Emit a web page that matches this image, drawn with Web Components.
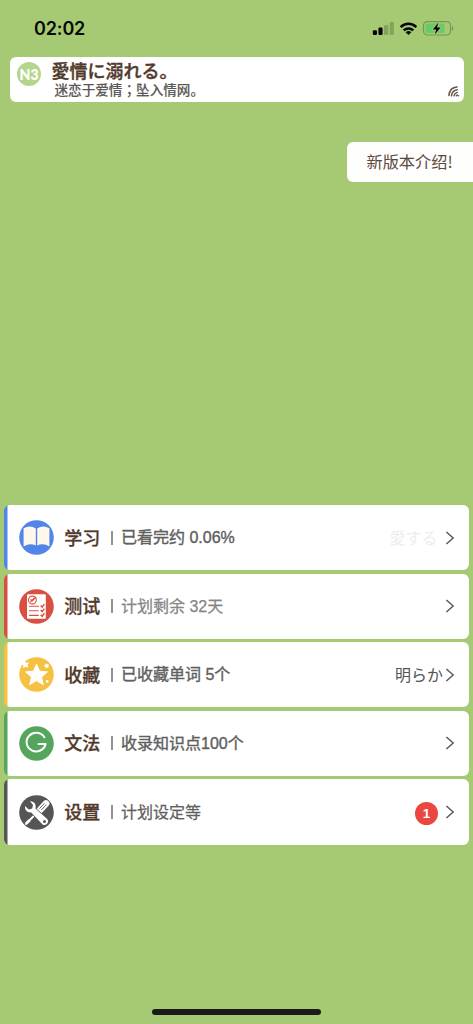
<!DOCTYPE html>
<html lang="zh-CN">
<head>
<meta charset="utf-8">
<title>单词学习</title>
<style>
html,body{margin:0;height:100%;overflow:hidden}
body{background:#a5ca73;font-family:"Liberation Sans","Noto Sans CJK SC",sans-serif}
</style>
</head>
<body>
<study-app></study-app>
<script>
const define = (name, html, setup) => customElements.define(name, class extends HTMLElement {
  connectedCallback() {
    if (this.shadowRoot) return;
    const t = document.createElement('template');
    t.innerHTML = html;
    this.attachShadow({mode: 'open'}).append(t.content.cloneNode(true));
    if (setup) setup(this, this.shadowRoot);
  }
});

define('status-bar', `
<style>
:host{display:flex;height:57px;box-sizing:border-box;justify-content:space-between;padding:0 19px 0 34px;align-items:center}
time{font:600 18px/22px Inter,sans-serif;color:#080a05;letter-spacing:-.15px;padding-top:1px}
svg{display:block}
</style>
<time>02:02</time>
<svg width="82" height="18" viewBox="372 20 82 18">
  <g fill="#050505"><rect x="372.8" y="30.2" width="4.2" height="4.8" rx="1.2"/><rect x="378.4" y="27.6" width="4.2" height="7.4" rx="1.2"/></g>
  <g fill="#84a25c"><rect x="384" y="25" width="4.2" height="10" rx="1.2"/><rect x="389.7" y="22" width="4.2" height="13" rx="1.2"/></g>
  <g fill="none" stroke="#050505" stroke-width="2.5"><path d="M400.7 27.1a11 11 0 0 1 15.6 0"/><path d="M403.7 30.4a6.8 6.8 0 0 1 9.6 0"/></g>
  <path d="M405.7 32.3a4 4 0 0 1 5.6 0L408.5 35.1z" fill="#050505"/>
  <rect x="423.5" y="21.6" width="27" height="13.4" rx="4" fill="none" stroke="#799657" stroke-width="1.2"/>
  <rect x="425.4" y="23.5" width="19" height="9.6" rx="2" fill="#65cb67"/>
  <path d="M451.8 26v5q1.5-.8 1.5-2.5t-1.5-2.5z" fill="#799657"/>
  <path d="M438.3 22.6l-5.5 6.8h3.4l-1.3 5.2 5.7-7h-3.5z" fill="#050505" stroke="#a5ca73" stroke-width="2" paint-order="stroke"/>
</svg>`);

define('word-card', `
<style>
:host{display:flex;height:45.4px;box-sizing:border-box;margin:0 9.5px;padding:5px 4px 0 7.5px;background:#fff;border-radius:6px}
.level{flex:none;width:24px;height:24px;border-radius:50%;background:#b4d68c;color:#fff;font:800 14px/25px Lato,sans-serif;text-align:center}
.text{flex:1;padding-left:10.5px;white-space:nowrap}
.jp{height:20px;margin-top:-.6px;font:500 18px/18px "Noto Sans CJK JP",sans-serif;color:#513a2b;-webkit-text-stroke:.4px}
.cn{padding-left:3px;font:500 13.6px/16px "Noto Sans CJK SC",sans-serif;color:#5b5856;-webkit-text-stroke:.1px}
svg{align-self:flex-end;margin-bottom:5px}
</style>
<span class="level">N3</span>
<div class="text"><div class="jp"><slot name="word"></slot></div><div class="cn"><slot name="meaning"></slot></div></div>
<svg width="12" height="11" viewBox="0 0 12 11" fill="none" stroke="#665247" stroke-width="1.5" stroke-linecap="round"><path d="M.9 9.5C1.3 4.5 4.5 1.2 9 .9M3.4 9.8C3.9 6.5 6 4.2 9.2 3.7M6 9.8C6.3 8.2 7.5 6.9 9.2 6.4M8.4 9.8l.8-.8M10.5 9.8h.1"/></svg>`);

define('version-tag', `
<style>
:host{display:block;margin:39.6px 0 0 347px;height:40px;box-sizing:border-box;padding-left:19.5px;border-radius:6px 0 0 6px;background:#fefefc;color:#5b493e;font:400 16.2px/39px "Noto Sans CJK SC",sans-serif;white-space:nowrap}
</style><slot></slot>`);

const icons = {
  book: `<circle cx="17.5" cy="17.5" r="17.3" fill="#5285e9"/>
    <path d="M4.6 8.3Q11.2 4.8 16.8 8.5V25.5Q11 22.4 4.6 26.4zM18.2 8.5Q23.8 4.8 30.4 8.3V26.4Q24 22.4 18.2 25.5z" fill="#fff6ec"/>`,
  test: `<circle cx="17.5" cy="17.5" r="17.3" fill="#d85041"/>
    <rect x="8" y="5.2" width="18.8" height="24.6" rx="1" fill="#fff"/>
    <g fill="none" stroke="#d85041" stroke-width="1.1"><circle cx="13.4" cy="11" r="3.9"/><path d="M11.5 10.3l1.7 1.7 3.8-4M11.4 13l4-4"/>
    <path d="M10 17.2h9.8M10 21.7h9.8M10 26.4h9.8"/><path d="M21.7 16.6l1.4 1.5 2.3-3M21.7 21.1l1.4 1.5 2.3-3M21.7 25.8l1.4 1.5 2.3-3" stroke-width="1.4"/></g>`,
  star: `<circle cx="17.5" cy="17.5" r="17.3" fill="#f5c142"/>
    <path d="M17.5 7l3.1 7.2 7.8.7-5.9 5.1 1.8 7.7-6.8-4.1-6.8 4.1 1.8-7.7L6.6 14.9l7.8-.7z" fill="#fff" stroke="#fff" stroke-width="1" stroke-linejoin="round"/>
    <path d="M5.3 3.6l1.8 2.1 2.9-.2-1.4 2.4.8 2.7-2.7-.9-2.4 1.5v-2.8L2 6.7l2.8-.7z" fill="#fff"/>
    <path d="M27 6.6l1 1.1 1.5-.1-.6 1.4.5 1.4-1.5-.3-1.2.9-.2-1.5-1.3-.8 1.4-.7z" fill="#fff" stroke="#fff" stroke-width=".6"/><circle cx="28.2" cy="24.4" r="1.3" fill="#fff"/>`,
  grammar: `<circle cx="17.5" cy="17.5" r="17.3" fill="#55a65c"/>
    <path d="M25.4 11.2A9.6 9.3 0 1 0 26.6 18H19.5" fill="none" stroke="#fff" stroke-width="2" stroke-linecap="round" stroke-linejoin="round"/>`,
  tools: `<circle cx="17.5" cy="17.5" r="17.3" fill="#555"/>
    <path d="M21 15l6-6.5" stroke="#fff" stroke-width="6.7" stroke-linecap="round"/>
    <path d="M20.5 13.6l5-5.3M22.3 15l5-5.3" stroke="#555" stroke-width=".9"/>
    <path d="M17 18.7L10 25.8" stroke="#fff" stroke-width="2"/><path d="M9.5 24.2l2.1 2-3.4 3.4-2.5.4.8-2.8z" fill="#fff"/>
    <path d="M11 6.2c4-.4 6.7 3.4 5.4 7.4l11.8 10.4a3.6 3.6 0 0 1-4.9 5.2L12.3 17.5C8.5 18.2 5.3 15 6.1 11.1L9.7 14.4 13.2 13.5 14 10.1z" fill="#fff" stroke="#555" stroke-width="1.4" paint-order="stroke"/>
    <circle cx="25.5" cy="26.5" r="1.5" fill="#555"/>`
};

define('menu-row', `
<style>
:host{display:flex;align-items:center;height:65.3px;box-sizing:border-box;padding:0 14px 0 15.5px;background:linear-gradient(90deg,var(--accent) 3.4px,#fff 3.6px);border-radius:6px;white-space:nowrap}
.icon{flex:none;width:35px;height:35px}
svg{display:block}
.name{margin-left:10px;width:47px;margin-top:-2px;font:500 18px/26px "Noto Sans CJK SC",sans-serif;color:#513a2b;-webkit-text-stroke:.3px}
.bar{width:1.3px;height:14px;background:#929292;margin-right:8.4px}
.desc{flex:1;padding-top:1px;font:400 16px/24px "Liberation Sans","Noto Sans CJK SC",sans-serif;color:var(--desc,#5f5f5f);-webkit-text-stroke:var(--weight,.4px)}
.extra{font:400 16px/24px "Noto Sans CJK JP",sans-serif;color:var(--extra,#555);margin-top:-1px}
.arrow{margin-left:2px}
</style>
<span class="icon"></span><span class="name"><slot name="name"></slot></span><i class="bar"></i>
<span class="desc"><slot></slot></span><span class="extra"><slot name="extra"></slot></span>
<svg class="arrow" width="10" height="16" viewBox="0 0 10 16"><path d="M1.4 2l6.8 6-6.8 6" fill="none" stroke="#555" stroke-width="1.4"/></svg>`,
(host, root) => {
  root.querySelector('.icon').innerHTML = '<svg width="35" height="35" viewBox="0 0 35 35">' + icons[host.getAttribute('icon')] + '</svg>';
});

define('count-badge', `
<style>:host{display:block;width:23px;height:23px;border-radius:50%;background:#e9473f;color:#fff;font:700 13.5px/23px "Liberation Sans",sans-serif;text-align:center;margin:4px 5px 0 0}</style><slot></slot>`);

define('study-app', `
<style>
:host{display:flex;flex-direction:column;height:1024px;width:473px;background:#a5ca73}
nav{display:flex;flex-direction:column;gap:3.3px;margin:323px 4px 0 3.8px}
.home{width:169px;height:5.6px;border-radius:3px;background:#1b1c1a;margin:auto auto 9.4px 152px}
</style>
<status-bar></status-bar>
<word-card><span slot="word">愛情に溺れる。</span><span slot="meaning">迷恋于爱情<span lang="zh-TW" style="font-family:'Noto Sans CJK TC',sans-serif">；</span>坠入情网。</span></word-card>
<version-tag>新版本介绍!</version-tag>
<nav>
<menu-row icon="book" style="--accent:#5285e9;--extra:#ededed"><span slot="name">学习</span>已看完约 0.06%<span slot="extra" style="margin-right:5.5px">愛する</span></menu-row>
<menu-row icon="test" style="--accent:#d85041;--desc:#858585;--weight:.25px"><span slot="name">测试</span>计划剩余 32天</menu-row>
<menu-row icon="star" style="--accent:#f5c142"><span slot="name">收藏</span>已收藏单词 5个<span slot="extra">明らか</span></menu-row>
<menu-row icon="grammar" style="--accent:#55a65c"><span slot="name">文法</span>收录知识点100个</menu-row>
<menu-row icon="tools" style="--accent:#555;--weight:.25px"><span slot="name">设置</span>计划设定等<count-badge slot="extra">1</count-badge></menu-row>
</nav>
<div class="home"></div>`);
</script>
</body>
</html>
